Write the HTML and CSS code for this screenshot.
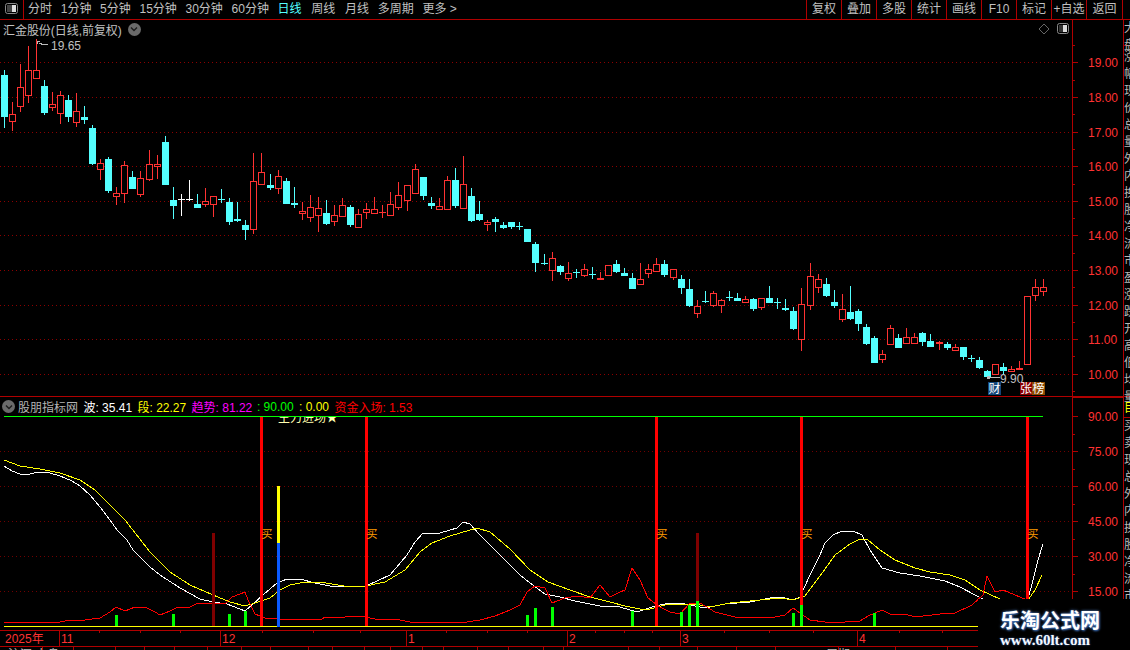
FILE: index.html
```html
<!DOCTYPE html>
<html lang="zh-CN">
<head>
    <meta charset="UTF-8">
    <title>汇金股份 - 日线</title>
    <link rel="stylesheet" href="styles.css">
    <script src="script.js"></script>
</head>
<body>
    <div class="toolbar">
        <div class="tool-icon">
            <svg width="14" height="12" viewBox="0 0 14 12">
                <rect x="0.5" y="0.5" width="12" height="10" rx="2" fill="none" stroke="#888"/>
                <rect x="2" y="2" width="5" height="7" fill="#444"/>
                <rect x="7" y="2" width="4" height="7" fill="#ddd"/>
            </svg>
        </div>
        <div class="periods">
            <span>分时</span>
            <span>1分钟</span>
            <span>5分钟</span>
            <span>15分钟</span>
            <span>30分钟</span>
            <span>60分钟</span>
            <span class="active">日线</span>
            <span class="wide">周线</span>
            <span class="wide">月线</span>
            <span>多周期</span>
            <span>更多 &gt;</span>
        </div>
        <div class="actions">
            <span>复权</span>
            <span>叠加</span>
            <span>多股</span>
            <span>统计</span>
            <span>画线</span>
            <span>F10</span>
            <span>标记</span>
            <span>+自选</span>
            <span class="last">返回</span>
        </div>
    </div>

    <div class="workspace">
        <div class="panes">
            <div class="pane pane-main">
                <div class="plot">
                    <div class="plot-head head-main">
                        <span class="stock-name">汇金股份(日线,前复权)</span>
                        <span class="round-btn"><svg width="8" height="6" viewBox="0 0 8 6"><path d="M1 1.5 L4 4.5 L7 1.5" fill="none" stroke="#1c1c1c" stroke-width="1.4"/></svg></span>
                        <span class="head-tools">
                            <svg width="12" height="12" viewBox="0 0 12 12"><path d="M6 1 L11 6 L6 11 L1 6 Z" fill="none" stroke="#666"/></svg>
                            <svg width="13" height="12" viewBox="0 0 13 12">
                                <rect x="0.5" y="0.5" width="11" height="10" rx="2" fill="none" stroke="#888"/>
                                <rect x="2" y="2" width="4" height="7" fill="#333"/>
                                <rect x="6" y="2" width="4" height="7" fill="#ddd"/>
                            </svg>
                        </span>
                    </div>
                    <svg id="klineChart" class="chart" width="1072" height="358" viewBox="0 38 1072 358"></svg>
                </div>
                <svg id="mainScale" class="scale" width="50" height="376" viewBox="1073 20 50 376"></svg>
            </div>

            <div class="pane pane-sub">
                <div class="plot">
                    <div class="plot-head head-sub">
                        <span class="round-btn"><svg width="8" height="6" viewBox="0 0 8 6"><path d="M1 1.5 L4 4.5 L7 1.5" fill="none" stroke="#1c1c1c" stroke-width="1.4"/></svg></span>
                        <span class="ind-name">股朋指标网</span>
                        <span class="ind ind-white">波: 35.41</span>
                        <span class="ind ind-yellow">段: 22.27</span>
                        <span class="ind ind-magenta">趋势: 81.22</span>
                        <span class="ind ind-green">: 90.00</span>
                        <span class="ind ind-yellow">: 0.00</span>
                        <span class="ind ind-red">资金入场: 1.53</span>
                    </div>
                    <svg id="indicatorChart" class="chart" width="1072" height="214" viewBox="0 416 1072 214"></svg>
                </div>
                <svg id="subScale" class="scale" width="50" height="233" viewBox="1073 397 50 233"></svg>
            </div>

            <svg id="timeline" class="timeline" width="1123" height="20" viewBox="0 630 1123 20"></svg>
        </div>

        <div class="side">
            <div class="side-top">
                <span>大</span><span>盘</span>
            </div>
            <div class="side-list">
                <span>涨</span><span>幅</span><span>现</span><span>价</span><span>总</span><span>量</span>
                <span>外</span><span>内</span><span>换</span><span>股</span><span>净</span><span>流</span>
                <span>市</span><span>盈</span><span>涨</span><span>跌</span><span>开</span><span>高</span>
                <span>低</span><span>均</span><span>量</span>
            </div>
            <div class="side-sub">
                <span class="side-hi">目</span>
                <span>买</span><span>卖</span><span>现</span><span>总</span><span>外</span><span>内</span>
                <span>换</span><span>股</span><span>净</span><span>流</span><span>市</span>
            </div>
        </div>
    </div>

    <div class="watermark">
        <div class="wm-title">乐淘公式网</div>
        <div class="wm-url">www.60lt.com</div>
    </div>
</body>
</html>
```

FILE: styles.css
```css
* {
    margin: 0;
    padding: 0;
    box-sizing: border-box;
}
html, body {
    width: 1130px;
    height: 650px;
    overflow: hidden;
    background: #000;
}
body {
    font-family: "Liberation Sans", "Noto Sans CJK SC", sans-serif;
    font-size: 12px;
    color: #c0c0c0;
    position: relative;
}
svg {
    display: block;
}
.toolbar {
    display: flex;
    height: 20px;
    border-bottom: 1px solid #b00000;
    line-height: 19px;
}
.tool-icon {
    width: 24px;
    padding: 3px 0 0 5px;
    border-right: 1px solid #b00000;
}
.periods {
    display: flex;
    padding-left: 4px;
    gap: 8.7px;
}
.periods .active {
    color: #54ffff;
}
.periods .wide {
    margin-left: 1px;
}
.actions {
    margin-left: auto;
    display: flex;
    margin-right: 7px;
}
.actions span {
    width: 35px;
    text-align: center;
    border-left: 1px solid #b00000;
    white-space: nowrap;
}
.actions .last {
    width: 37px;
    border-right: 1px solid #b00000;
}

.workspace {
    display: flex;
    height: 630px;
}
.panes {
    width: 1124px;
    border-right: 1px solid #b00000;
    flex: none;
}
.pane {
    display: flex;
}
.pane-main {
    height: 377px;
    border-bottom: 1px solid #b00000;
}
.pane-sub {
    height: 233px;
}
.plot {
    width: 1072px;
    flex: none;
}
.scale {
    box-sizing: content-box;
    border-left: 1px solid #b00000;
    flex: none;
}
.plot-head {
    display: flex;
    align-items: center;
}
.head-main {
    height: 18px;
    padding-left: 3px;
}
.head-sub {
    height: 19px;
    padding-left: 2px;
}
.stock-name {
    letter-spacing: -0.05px;
}
.round-btn {
    width: 13px;
    height: 13px;
    border-radius: 50%;
    background: #6a6a6a;
    display: flex;
    align-items: center;
    justify-content: center;
    flex: none;
    margin-left: 6px;
}
.head-sub .round-btn {
    margin-left: 0;
}
.head-tools {
    margin-left: auto;
    display: flex;
    gap: 7px;
    padding-right: 2px;
}
.ind-name {
    margin-left: 3px;
    color: #b4b4b4;
}
.ind {
    margin-left: 5.4px;
    white-space: nowrap;
}
.ind-white { color: #fff; }
.ind-yellow { color: #ffff00; }
.ind-magenta { color: #ff00ff; }
.ind-green { color: #00ff00; margin-left: 4.6px; }
.ind-red { color: #ff0000; }

.chart text, .scale text, .timeline text {
    font-family: "Liberation Sans", "Noto Sans CJK SC", sans-serif;
    font-size: 12px;
}
.chart, .scale, .timeline {
    shape-rendering: crispEdges;
}

.side {
    flex: 1;
    overflow: hidden;
    white-space: nowrap;
    color: #b8b8b8;
    line-height: 17px;
}
.side span {
    display: block;
}
.side-top {
    height: 26px;
    border-bottom: 1px solid #b00000;
}
.side-list {
    height: 350px;
    padding-top: 3px;
}
.side-sub {
    border-top: 1px solid #b00000;
    padding-top: 3px;
}
.side-hi {
    color: #ffff00;
    height: 18px;
    border-bottom: 1px solid #b00000;
}

.watermark {
    position: absolute;
    left: 978px;
    top: 599px;
    width: 152px;
    height: 51px;
    background: #000;
    font-family: "Noto Sans CJK SC", sans-serif;
    color: #fff;
    padding: 9px 0 0 22px;
}
.wm-title {
    font-size: 20px;
    font-weight: 700;
    line-height: 24px;
    text-shadow: 0 0 3px #5a8cd2, 1px 1px 2px #2a5aa0;
}
.wm-url {
    font-family: "Liberation Serif", serif;
    font-size: 15px;
    font-weight: 700;
    line-height: 16px;
    color: #f4f8ff;
    text-shadow: 0 0 2px #3a6ab4;
}
```

FILE: script.js
```js
document.addEventListener("DOMContentLoaded", () => {
    const RED = '#ff3232';
    const CYAN = '#54ffff';
    const AXIS = '#b00000';

    // high, body top, body bottom, low (all in page y), kind
    // r hollow red, R solid red, c cyan, w white
    const candles = [
        [70,75,117,128,'c'],[102,114,122,131,'r'],[64,87,107,112,'r'],[46,70,96,103,'r'],[39,70,79,79,'r'],
        [80,86,113,115,'c'],[92,104,108,111,'r'],[91,95,114,124,'r'],[95,100,117,122,'c'],[93,111,123,127,'r'],
        [106,117,120,124,'c'],[125,128,164,165,'c'],[159,163,170,180,'r'],[157,159,191,193,'c'],[187,193,197,205,'r'],
        [161,165,194,203,'r'],[171,177,189,189,'c'],[171,178,195,197,'r'],[150,164,180,181,'r'],[155,164,167,179,'r'],
        [136,142,185,185,'c'],[187,200,206,219,'c'],[194,199,199,216,'w'],[180,199,199,201,'w'],[194,204,208,208,'c'],
        [188,201,205,207,'r'],[196,196,205,217,'r'],[189,199,199,203,'c'],[198,202,222,225,'c'],[202,219,221,222,'c'],
        [220,225,230,240,'c'],[153,181,230,234,'r'],[153,172,185,185,'r'],[174,185,188,190,'c'],[170,176,189,194,'r'],
        [178,181,204,204,'c'],[187,203,205,208,'c'],[202,211,214,220,'r'],[195,207,218,222,'r'],[197,208,216,232,'r'],
        [200,213,224,225,'c'],[205,215,222,226,'r'],[198,205,217,217,'r'],[205,207,225,227,'c'],[209,214,228,228,'r'],
        [203,209,213,219,'r'],[197,209,214,214,'r'],[205,212,213,218,'R'],[192,204,216,216,'r'],[182,195,208,210,'r'],
        [185,185,201,211,'r'],[164,169,194,194,'r'],[177,177,196,200,'c'],[197,203,206,209,'c'],[198,206,210,210,'r'],
        [176,180,210,210,'r'],[168,180,206,208,'c'],[156,184,209,209,'r'],[188,196,221,222,'c'],[201,214,220,221,'c'],
        [220,222,225,231,'r'],[217,219,222,232,'c'],[222,225,228,229,'c'],[222,222,227,229,'c'],[222,226,226,230,'c'],
        [229,229,242,242,'c'],[242,244,263,272,'c'],[254,263,263,265,'c'],[252,258,271,281,'r'],[265,266,272,275,'c'],
        [262,273,279,281,'r'],[269,272,272,278,'c'],[264,269,276,277,'r'],[267,274,274,279,'c'],[272,278,278,279,'R'],
        [265,265,276,276,'r'],[260,264,272,273,'c'],[268,273,276,276,'c'],[273,278,289,289,'c'],[263,279,285,285,'r'],
        [264,269,274,278,'r'],[258,264,272,272,'r'],[260,264,275,277,'c'],[269,269,278,280,'r'],[275,279,288,294,'c'],
        [279,289,306,307,'c'],[300,306,314,318,'r'],[291,301,301,303,'c'],[291,293,306,307,'r'],[299,300,306,313,'r'],
        [291,297,297,301,'c'],[293,298,301,301,'c'],[296,299,303,303,'r'],[298,299,309,311,'c'],[298,298,308,310,'r'],
        [286,298,303,303,'c'],[298,302,302,309,'c'],[299,308,310,311,'c'],[307,311,329,330,'c'],[288,304,340,351,'r'],
        [263,276,306,310,'r'],[274,279,288,293,'r'],[278,284,296,297,'c'],[290,302,306,308,'c'],[294,309,320,322,'r'],
        [286,312,319,320,'c'],[309,311,324,331,'c'],[324,327,344,345,'c'],[336,338,363,363,'c'],[350,354,360,363,'r'],
        [325,328,345,345,'r'],[334,338,348,348,'c'],[328,337,344,344,'r'],[333,337,344,344,'r'],[332,333,342,346,'c'],
        [334,341,347,347,'c'],[341,342,344,350,'R'],[342,344,348,350,'c'],[344,347,351,351,'r'],[347,347,357,360,'c'],
        [355,358,358,362,'c'],[357,360,368,369,'c'],[370,371,377,377,'c'],[364,364,375,375,'r'],[363,367,371,375,'c'],
        [366,369,372,372,'r'],[361,368,368,369,'R'],[296,296,365,365,'r'],[279,287,296,301,'r'],[279,287,292,296,'r']
    ];

    // the K-line slots are not quite 8px: one pixel is added at these indexes
    const jumps = [18, 33, 50, 67, 83, 100, 116];
    const candleX = (k) => 4 + 8 * k + jumps.filter(j => k >= j).length;

    const box = (x, y, w, h, fill) => `<rect x="${x}" y="${y}" width="${w}" height="${h}" fill="${fill}"/>`;
    const label = (x, y, text, fill, extra = '') => `<text x="${x}" y="${y}" fill="${fill}" ${extra}>${text}</text>`;
    const dots = (y, color) => `<line x1="0" x2="1072" y1="${y + 0.5}" y2="${y + 0.5}" stroke="${color}" stroke-dasharray="1 3"/>`;
    const line = (pts, color, w = 1) => `<polyline points="${pts.map(p => p.join(',')).join(' ')}" fill="none" stroke="${color}" stroke-width="${w}"/>`;

    // Main K-line pane
    const priceLines = [62, 97, 132, 166, 201, 235, 270, 305, 339, 374];
    let kline = priceLines.map(y => dots(y, '#8c0000')).join('');

    candles.forEach((c, k) => {
        const [high, top, bottom, low, kind] = c;
        const x = candleX(k);
        if (kind === 'r') {
            kline += box(x, high, 1, top - high, RED) + box(x, bottom, 1, low - bottom, RED);
            kline += `<rect x="${x - 2.5}" y="${top + 0.5}" width="6" height="${bottom - top - 1}" fill="#000" stroke="${RED}"/>`;
        } else {
            const color = kind === 'c' ? CYAN : kind === 'w' ? '#fff' : RED;
            const h = bottom - top || (kind === 'R' ? 2 : 1);
            kline += box(x, high, 1, low - high, color) + box(x - 3, top, 7, h, color);
        }
    });

    kline += `<path d="M37 41 L37 44 M37 41 L40 42 M39 43 L44 45 L48 44" fill="none" stroke="#bbb"/>`;
    kline += label(51, 50, '19.65', '#c0c0c0');
    kline += box(987, 376, 3, 3, '#bbb') + box(989, 377, 11, 1, '#bbb');
    kline += label(1000, 383, '9.90', '#c0c0c0');
    kline += box(988, 382, 13, 13, '#14467a') + label(988.5, 393, '财', '#fff');
    kline += box(1020, 382, 12, 13, '#8b0000') + label(1020, 393, '张', '#fff');
    kline += box(1032, 382, 13, 13, '#8c4a00') + label(1032.5, 393, '榜', '#fff');
    document.getElementById('klineChart').innerHTML = kline;

    // Price / value scales
    const scale = (rows, halfTicks) => {
        let out = '';
        rows.forEach(([y, text]) => {
            out += box(1073, y, 5, 1, AXIS);
            out += label(1088, y + 5, text, RED);
        });
        halfTicks.forEach(y => { out += box(1073, y, 2, 1, AXIS); });
        return out;
    };
    const priceRows = ['19.00', '18.00', '17.00', '16.00', '15.00', '14.00', '13.00', '12.00', '11.00', '10.00']
        .map((t, i) => [priceLines[i], t]);
    const priceHalf = [45, 80, 114, 149, 184, 218, 253, 287, 322, 356, 391];
    document.getElementById('mainScale').innerHTML = scale(priceRows, priceHalf);

    const valueRows = [[416, '90.00'], [451, '75.00'], [486, '60.00'], [521, '45.00'], [556, '30.00'], [591, '15.00']];
    const valueHalf = [434, 469, 504, 539, 574, 609];
    document.getElementById('subScale').innerHTML = box(1073, 397, 50, 1, AXIS) + scale(valueRows, valueHalf);

    // Indicator pane
    const waveLine = [[4,466],[12,471],[20,474],[30,474],[38,472],[50,473],[60,476],[72,481],[80,486],[90,495],[100,507],[110,520],[117,530],[127,540],[133,550],[150,567],[160,575],[180,588],[200,599],[213,602],[227,604],[245,611],[253,604],[263,595],[277,583],[287,579],[300,579],[315,583],[330,586],[350,587],[366,586],[390,575],[407,555],[415,542],[423,533],[440,533],[457,528],[463,522],[470,524],[480,535],[500,555],[520,575],[530,583],[545,594],[560,597],[575,601],[600,606],[620,607],[637,612],[655,606],[670,603],[680,603],[695,606],[705,608],[725,604],[750,602],[775,597],[785,598],[793,600],[800,597],[810,575],[820,555],[825,543],[833,535],[842,531],[853,531],[862,535],[870,550],[882,568],[900,573],[920,576],[945,581],[960,587],[975,595],[985,600],[1000,600],[1028,599],[1033,580],[1038,560],[1043,544]];
    const segLine = [[4,460],[20,466],[40,469],[60,473],[80,480],[95,490],[110,505],[125,520],[150,552],[170,572],[190,585],[213,595],[230,602],[245,606],[255,603],[270,598],[280,590],[290,585],[300,583],[320,582],[350,587],[366,586],[385,582],[405,570],[420,552],[432,543],[450,536],[470,530],[477,528],[490,532],[510,549],[530,570],[548,582],[570,590],[590,597],[610,602],[625,606],[640,609],[650,609],[665,605],[685,604],[700,605],[710,607],[730,603],[760,600],[780,598],[793,600],[805,596],[820,576],[835,555],[850,544],[860,539],[868,540],[880,550],[895,560],[915,568],[930,572],[950,575],[965,580],[980,590],[1000,599],[1028,600],[1035,590],[1042,575]];
    const moneyLine = [[4,622],[60,622],[65,621],[85,620],[100,618],[110,612],[116,607],[125,611],[135,607],[145,607],[155,612],[160,615],[170,611],[178,607],[190,607],[198,603],[225,604],[232,597],[240,594],[245,592],[248,600],[255,614],[265,618],[280,619],[300,619],[322,619],[325,617],[340,618],[350,616],[365,617],[375,619],[395,619],[410,622],[425,622],[440,622],[460,623],[480,620],[495,616],[510,610],[520,605],[527,592],[535,586],[545,588],[552,603],[565,598],[578,596],[590,598],[600,585],[610,597],[620,592],[625,590],[632,568],[640,580],[648,598],[660,607],[670,612],[680,614],[690,603],[700,603],[715,612],[735,617],[755,617],[775,617],[785,615],[793,608],[800,613],[810,620],[825,622],[845,622],[860,621],[868,616],[882,610],[892,615],[905,614],[915,617],[940,614],[955,613],[972,605],[983,595],[987,576],[995,592],[1003,590],[1020,597],[1027,600]];

    let ind = [451, 486, 521, 556, 591].map(y => dots(y, '#700000')).join('');
    ind += line(waveLine, '#fff') + line(segLine, '#ffff00') + line(moneyLine, '#ff0000');
    ind += box(4, 626, 974, 1, '#ffff00');

    // dark red bars
    ind += box(212, 533, 3, 93, '#800000') + box(696, 533, 3, 68, '#800000');
    // yellow and blue bar
    ind += box(277, 486, 3, 57, '#ffff00') + box(277, 543, 3, 84, '#0a5aff');

    [261, 366, 656, 801, 1027].forEach(x => {
        ind += box(x - 1, 417, 3, 209, '#ff0000');
        ind += label(x + 0.5, 538, '买', '#ff9900', 'style="font-size:11px"');
    });

    const greenBars = [[116,615],[173,614],[229,614],[245,611],[527,615],[535,608],[552,607],[632,611],[681,612],[689,605],[697,601],[793,613],[801,605],[874,613]];
    greenBars.forEach(([x, y]) => {
        ind += box(x - 1, y, 3, 626 - y, '#00ff00');
    });

    ind += label(278, 422, '主力进场★', '#ffffb0');
    ind += box(4, 416, 1039, 1, '#00ff00');
    document.getElementById('indicatorChart').innerHTML = ind;

    // Date strip
    let strip = box(0, 630, 1123, 1, AXIS) + box(0, 646, 1123, 1, AXIS);
    [59, 220, 406, 567, 680, 857].forEach(x => { strip += box(x, 631, 1, 15, AXIS); });
    [99, 140, 180, 262, 313, 360, 446, 487, 527, 595, 624, 652, 724, 769, 813, 899, 942].forEach(x => {
        strip += box(x, 631, 1, 2, AXIS);
    });
    [42, 73, 115, 144, 174, 207, 241, 270, 308, 332, 364, 390, 422, 443, 477, 508, 543, 563, 628, 659, 697, 736, 775, 838, 895, 947].forEach(x => {
        strip += box(x, 647, 1, 3, AXIS);
    });
    strip += label(5, 643, '2025年', RED);
    [[61, '11'], [222, '12'], [408, '1'], [569, '2'], [682, '3'], [859, '4']].forEach(([x, t]) => {
        strip += label(x, 643, t, RED);
    });
    strip += label(8, 659, '沪深 大盘', '#c0c0c0') + label(826, 659, '周期', '#c0c0c0');
    document.getElementById('timeline').innerHTML = strip;
});
```
